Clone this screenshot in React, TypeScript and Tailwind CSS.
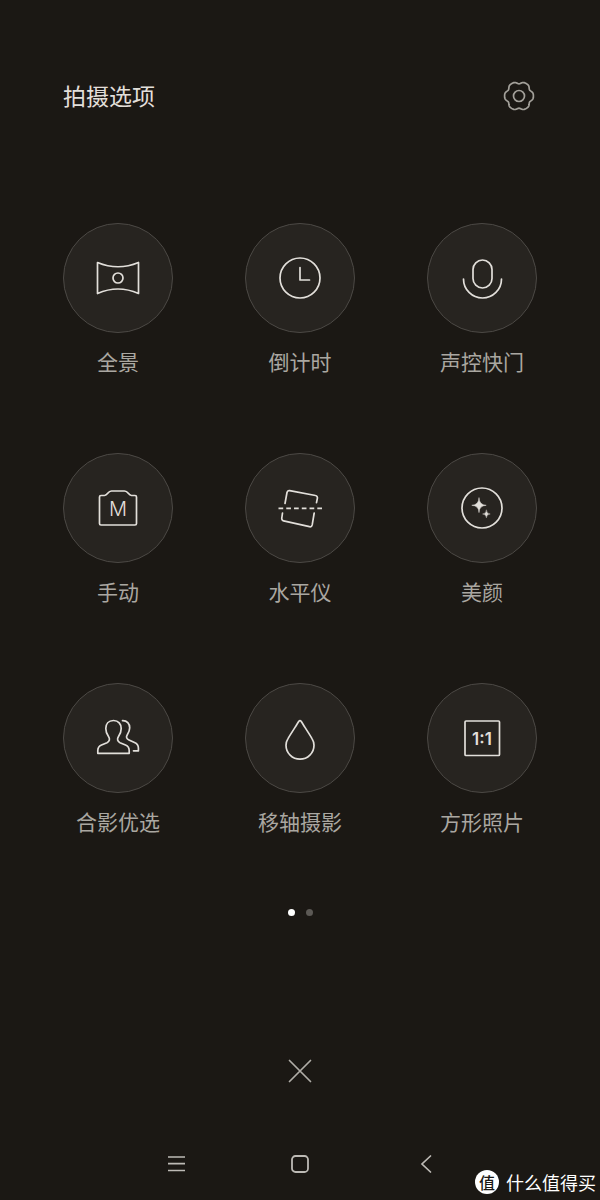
import { useState } from 'react'
import type { ReactNode } from 'react'

interface Opcion {
  id: string
  label: string
  icon: ReactNode
}

// Rounded six-lobe outline of the settings gear
const gearPath =
  Array.from({ length: 120 }, (_, i) => {
    const a = (i / 120) * Math.PI * 2
    const r = 13.6 + 1.1 * Math.cos(6 * a) - 0.3 * Math.cos(12 * a)
    return `${i === 0 ? 'M' : 'L'}${(18 + r * Math.cos(a)).toFixed(2)} ${(18 + r * Math.sin(a)).toFixed(2)}`
  }).join(' ') + ' Z'

const options: Opcion[] = [
  {
    id: 'panorama',
    label: '全景',
    icon: (
      <>
        <path d="M3.5 8.5Q24 17 44.5 8.5V39.5Q24 30.5 3.5 39.5Z" />
        <circle cx="24" cy="24" r="5" />
      </>
    ),
  },
  {
    id: 'timer',
    label: '倒计时',
    icon: (
      <>
        <circle cx="24" cy="24" r="20" />
        <path d="M24 13.5V26H33.5" />
      </>
    ),
  },
  {
    id: 'voice',
    label: '声控快门',
    icon: (
      <>
        <rect x="15" y="6" width="19" height="28" rx="9.5" />
        <path d="M5.5 25a19 19 0 0 0 38 0" />
      </>
    ),
  },
  {
    id: 'manual',
    label: '手动',
    icon: (
      <>
        <path d="M7 11.5H10.5C14 11.5 13.5 7 17.5 7H30.5C34.5 7 34 11.5 37.5 11.5H41A1.5 1.5 0 0 1 42.5 13V39.5A1.5 1.5 0 0 1 41 41H7A1.5 1.5 0 0 1 5.5 39.5V13A1.5 1.5 0 0 1 7 11.5Z" />
        <text
          x="24"
          y="32"
          textAnchor="middle"
          stroke="none"
          fill="currentColor"
          className="font-['Inter'] text-[20px] font-light"
        >
          M
        </text>
      </>
    ),
  },
  {
    id: 'level',
    label: '水平仪',
    icon: (
      <>
        <path d="M9 19.5L11 8.5A2.3 2.3 0 0 1 13.7 6.7L39.5 11.5A2.3 2.3 0 0 1 41.4 14.2L40.5 18.7" />
        <path d="M6.5 29L5.8 34A2.3 2.3 0 0 0 7.6 36.8L33.5 42.7A2.3 2.3 0 0 0 36.2 40.9L38.2 29" />
        <path d="M2.5 24.3H46" strokeDasharray="4.7 3.06" strokeLinecap="butt" />
      </>
    ),
  },
  {
    id: 'beauty',
    label: '美颜',
    icon: (
      <>
        <circle cx="24" cy="24" r="20" />
        <path
          d="M21 14Q21.3 21 28.2 21.3Q21.3 21.6 21 28.6Q20.7 21.6 13.8 21.3Q20.7 21 21 14Z"
          fill="currentColor"
          strokeWidth="0.5"
        />
        <path
          d="M28.4 26.2Q28.6 29.8 32.2 30Q28.6 30.2 28.4 33.8Q28.2 30.2 24.6 30Q28.2 29.8 28.4 26.2Z"
          fill="currentColor"
          strokeWidth="0.4"
        />
      </>
    ),
  },
  {
    id: 'group',
    label: '合影优选',
    icon: (
      <>
        <path d="M19.5 6.5C14.5 6.5 11.8 10 11.8 14.5C11.8 18 13 20.5 14.5 22.5C16.3 25 15.5 27.5 13 28.7L7.5 31C4.5 32.3 3.8 34 3.8 36.5V39.3H35.2V36.5C35.2 34 34.5 32.3 31.5 31L26 28.7C23.5 27.5 22.7 25 24.5 22.5C26 20.5 27.2 18 27.2 14.5C27.2 10 24.5 6.5 19.5 6.5Z" />
        <path d="M28.5 6.7C33 6.5 35.7 9.5 35.7 13.8C35.7 17 34.5 19 33.3 20.8C31.8 23 32.5 24.8 35 26L40.5 28.5C43.5 29.8 44.4 31.5 44.4 34V36.8H39.5" />
      </>
    ),
  },
  {
    id: 'tiltshift',
    label: '移轴摄影',
    icon: (
      <path d="M22.9 7.3Q24 5.8 25.1 7.3C28 12 33 19.5 36 24.6C37.5 27 38 29 38 31.2A14 14 0 0 1 10 31.2C10 29 10.5 27 12 24.6C15 19.5 20 12 22.9 7.3Z" />
    ),
  },
  {
    id: 'square',
    label: '方形照片',
    icon: (
      <>
        <rect x="7" y="7" width="34.5" height="34.5" rx="1" />
        <text
          x="24"
          y="31"
          textAnchor="middle"
          stroke="none"
          fill="currentColor"
          className="font-['Inter'] text-[17px] font-semibold"
        >
          1:1
        </text>
      </>
    ),
  },
]

export default function App() {
  const [page, setPage] = useState(0)

  return (
    <div className="relative flex min-h-screen flex-col bg-[#1b1814] font-['Noto_Sans_CJK_SC',sans-serif] text-[#e2dfda]">
      {/* Header */}
      <header className="flex items-start justify-between px-[63px] pt-[74px]">
        <h1 className="text-[23px] leading-[42px]">拍摄选项</h1>
        <button type="button" aria-label="设置" className="flex h-11 items-center text-[#a3a09a]">
          <svg viewBox="0 0 36 36" className="h-9 w-9" fill="none" stroke="currentColor" strokeWidth="1.7">
            <path d={gearPath} strokeLinejoin="round" />
            <circle cx="18" cy="18" r="5.5" />
          </svg>
        </button>
      </header>

      {/* Shooting modes */}
      <main className="mt-[105px] grid grid-cols-[repeat(3,110px)] justify-between gap-y-[77px] px-[63px]">
        {options.map((option) => (
          <button key={option.id} type="button" className="flex flex-col items-center gap-[13px]">
            <span className="flex h-[110px] w-[110px] items-center justify-center rounded-full border border-[#4c4945] bg-[#272420]">
              <svg
                viewBox="0 0 48 48"
                className="h-12 w-12"
                fill="none"
                stroke="currentColor"
                strokeWidth="1.7"
                strokeLinecap="round"
                strokeLinejoin="round"
              >
                {option.icon}
              </svg>
            </span>
            <span className="text-[21px] leading-[30px] text-[#aaa7a1]">{option.label}</span>
          </button>
        ))}
      </main>

      {/* Page dots */}
      <div className="mt-[73px] flex justify-center gap-[11px]">
        {[0, 1].map((i) => (
          <button
            key={i}
            type="button"
            aria-label={`第${i + 1}页`}
            onClick={() => setPage(i)}
            className={i === page ? 'h-[7px] w-[7px] rounded-full bg-white' : 'h-[7px] w-[7px] rounded-full bg-[#5c5955]'}
          />
        ))}
      </div>

      <button
        type="button"
        aria-label="关闭"
        className="mx-auto mt-auto mb-[35px] flex h-11 w-11 items-center justify-center text-[#b0ada7]"
      >
        <svg viewBox="0 0 24 24" className="h-6 w-6" fill="none" stroke="currentColor" strokeWidth="1.7" strokeLinecap="round">
          <path d="M1.5 1.5L22.5 22.5M22.5 1.5L1.5 22.5" />
        </svg>
      </button>

      {/* System navigation */}
      <nav className="flex h-[72px] items-center justify-center gap-[81px] text-[#bdbab5]">
        <button type="button" aria-label="菜单" className="flex h-11 w-11 items-center justify-center">
          <svg viewBox="0 0 20 20" className="h-5 w-5" fill="none" stroke="currentColor" strokeWidth="1.7">
            <path d="M3 3H20M3 9.7H20M3 16.5H20" />
          </svg>
        </button>
        <button type="button" aria-label="主页" className="flex h-11 w-11 items-center justify-center">
          <svg viewBox="0 0 20 20" className="h-5 w-5" fill="none" stroke="currentColor" strokeWidth="1.8">
            <rect x="2" y="2" width="16" height="16" rx="3.5" />
          </svg>
        </button>
        <button type="button" aria-label="返回" className="flex h-11 w-11 items-center justify-center">
          <svg viewBox="0 0 20 20" className="h-5 w-5" fill="none" stroke="currentColor" strokeWidth="1.7" strokeLinecap="round">
            <path d="M15.5 2L7 10L15.5 18" />
          </svg>
        </button>
      </nav>

      {/* Site watermark */}
      <div className="absolute right-1 bottom-1 flex items-center gap-[7px] text-white">
        <span className="flex h-6 w-6 items-center justify-center rounded-full bg-white text-[16px] leading-6 font-medium text-[#1b1814]">
          值
        </span>
        <span className="text-[18px] leading-[28px]">什么值得买</span>
      </div>
    </div>
  )
}
